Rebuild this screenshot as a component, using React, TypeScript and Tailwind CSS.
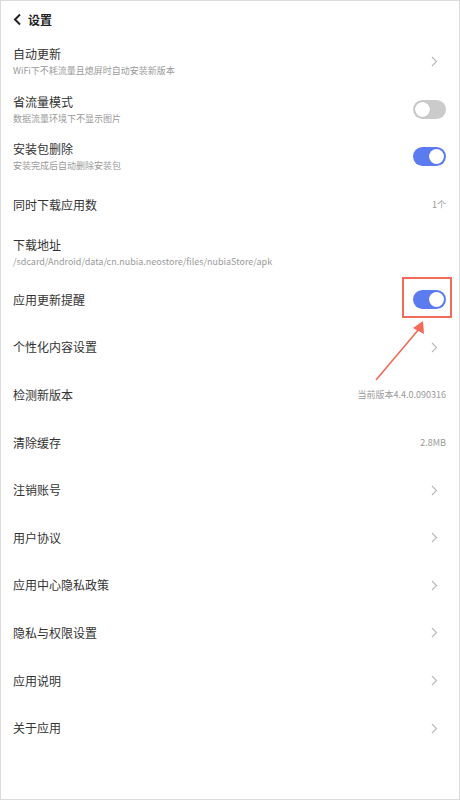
import React from 'react';

type Row = {
    title: string;
    sub?: string;
    right?: 'chevron' | 'on' | 'off' | string;
    mark?: boolean;
};

const rows: Row[] = [
    { title: '自动更新', sub: 'WiFi下不耗流量且熄屏时自动安装新版本', right: 'chevron' },
    { title: '省流量模式', sub: '数据流量环境下不显示图片', right: 'off' },
    { title: '安装包删除', sub: '安装完成后自动删除安装包', right: 'on' },
    { title: '同时下载应用数', right: '1个' },
    { title: '下载地址', sub: '/sdcard/Android/data/cn.nubia.neostore/files/nubiaStore/apk' },
    { title: '应用更新提醒', right: 'on', mark: true },
    { title: '个性化内容设置', right: 'chevron' },
    { title: '检测新版本', right: '当前版本4.4.0.090316' },
    { title: '清除缓存', right: '2.8MB' },
    { title: '注销账号', right: 'chevron' },
    { title: '用户协议', right: 'chevron' },
    { title: '应用中心隐私政策', right: 'chevron' },
    { title: '隐私与权限设置', right: 'chevron' },
    { title: '应用说明', right: 'chevron' },
    { title: '关于应用', right: 'chevron' },
];

function Toggle({ on }: { on: boolean }) {
    return (
        <div
            className={`w-[33px] h-[19px] rounded-full flex items-center px-[2px] ${
                on ? 'bg-[#5b7cf1] justify-end' : 'bg-[#cbcbcb] justify-start'
            }`}
        >
            <div className="w-[15px] h-[15px] rounded-full bg-white shadow-[0_0_1px_rgba(0,0,0,0.25)]" />
        </div>
    );
}

function Chevron() {
    return (
        <svg width="7" height="11" viewBox="0 0 7 11" className="mr-[8px]">
            <path d="M1 1l4.5 4.5L1 10" fill="none" stroke="#b8b8b8" strokeWidth="1.1" />
        </svg>
    );
}

function Right({ row }: { row: Row }) {
    if (!row.right) return null;
    if (row.right === 'chevron') return <Chevron />;
    if (row.right === 'on' || row.right === 'off') {
        const t = <Toggle on={row.right === 'on'} />;
        if (!row.mark) return t;
        return (
            <div className="relative">
                {t}
                <div className="absolute left-[-11px] right-[-6px] top-[-13px] bottom-[-9px] border-2 border-[#f26a58]" />
            </div>
        );
    }
    return <span className="text-[9px] text-[#9a9a9a]">{row.right}</span>;
}

export default function App() {
    return (
        <div
            className="relative w-[460px] h-[800px] bg-white border border-[#dcdcdc] overflow-hidden"
            style={{ fontFamily: '"Noto Sans CJK SC", "Noto Sans", sans-serif' }}
        >
            {/* Header */}
            <div className="h-[37px] flex items-center pl-[12px] gap-[6px]">
                <svg width="9" height="13" viewBox="0 0 9 13">
                    <path d="M7 1.5L2 6.5l5 5" fill="none" stroke="#222" strokeWidth="2" />
                </svg>
                <span className="text-[12px] font-bold text-[#222]">设置</span>
            </div>

            {/* List */}
            <div className="flex flex-col">
                {rows.map((row) => (
                    <div key={row.title} className="h-[47.6px] flex items-center justify-between pl-[12px] pr-[13px]">
                        <div className="flex flex-col">
                            <span className="text-[12px] leading-[16px] text-[#333]">{row.title}</span>
                            {row.sub && (
                                <span className="text-[9px] leading-[12px] mt-[3px] text-[#9a9a9a]">{row.sub}</span>
                            )}
                        </div>
                        <Right row={row} />
                    </div>
                ))}
            </div>

            {/* annotation arrow */}
            <svg className="absolute left-[368px] top-[316px]" width="60" height="70" viewBox="0 0 60 70">
                <line x1="7" y1="63" x2="50" y2="12" stroke="#f26a58" strokeWidth="1.6" />
                <polygon points="54,4 55,17 44,11" fill="#f26a58" />
            </svg>
        </div>
    );
}
